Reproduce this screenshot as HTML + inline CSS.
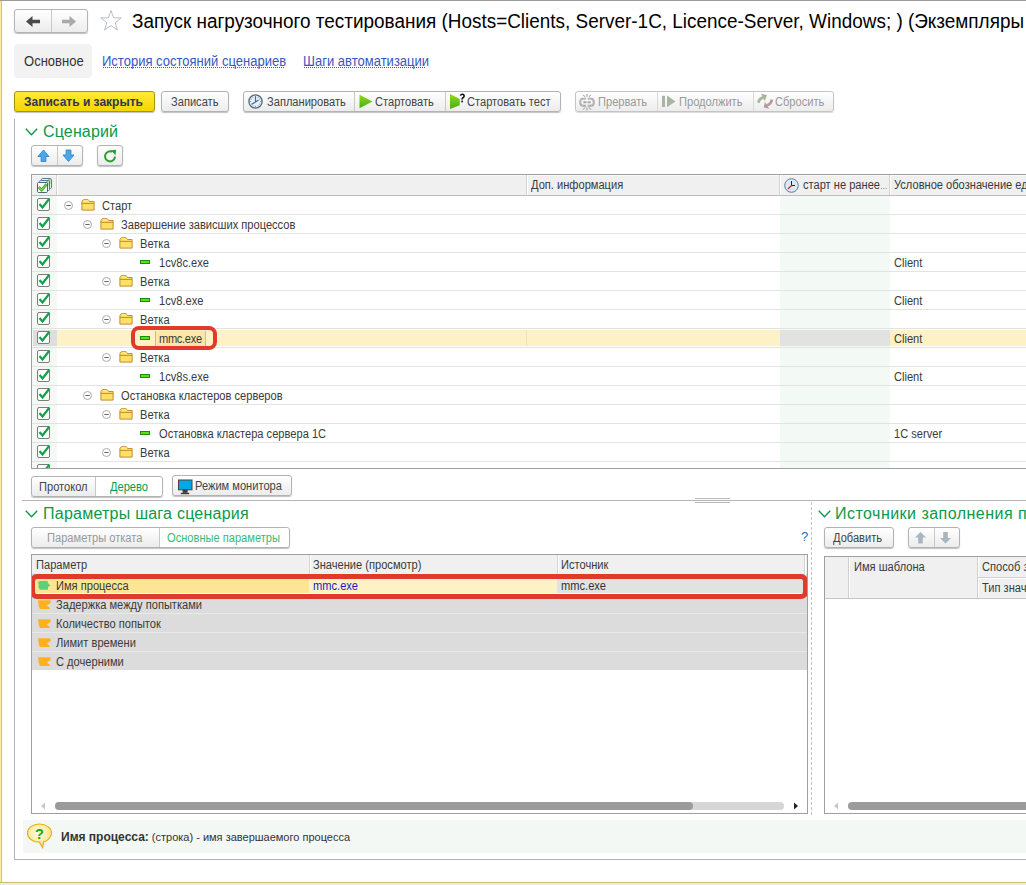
<!DOCTYPE html>
<html><head><meta charset="utf-8">
<style>
*{box-sizing:border-box;margin:0;padding:0}
html,body{width:1026px;height:885px;overflow:hidden;background:#fff;font-family:"Liberation Sans",sans-serif;color:#333}
.a{position:absolute}
svg{display:block}
.t{position:absolute;white-space:nowrap}
.btn{position:absolute;border:1px solid #b3b3b3;border-radius:3px;background:linear-gradient(#fff,#ececec);box-shadow:0 1px 1px rgba(0,0,0,.25)}
.grp{position:absolute;border:1px solid #b3b3b3;border-radius:3px;background:linear-gradient(#fff,#ececec);box-shadow:0 1px 1px rgba(0,0,0,.25)}
.sep{position:absolute;top:0;bottom:0;width:1px;background:#c8c8c8}
.bt{position:absolute;font-size:12px;color:#444;white-space:nowrap;transform:scaleX(.925);transform-origin:0 0;margin-top:-1px}
.h{position:absolute;font-size:16px;color:#0a9a48;white-space:nowrap}
.row{position:absolute;left:57px;right:0;height:19px;border-bottom:1px solid #e6e6e6}
.cb{position:absolute;width:13px;height:13px;border:1px solid #7a7a7a;border-radius:2px;background:#fff}
.ft{position:absolute;font-size:12px;color:#3a3a3a;white-space:nowrap;transform:scaleX(.925);transform-origin:0 0;margin-top:-1px}
</style></head>
<body>
<!-- window frame -->
<div class="a" style="left:0;top:0;width:1026px;height:1px;background:#9b9b9b"></div>
<div class="a" style="left:0;top:1px;width:1px;height:882px;background:#fdeb9a"></div><div class="a" style="left:1px;top:1px;width:1px;height:882px;background:#cdc488"></div>
<div class="a" style="left:0;top:882px;width:1026px;height:1px;background:#cbbd6e"></div>
<div class="a" style="left:0;top:883px;width:1026px;height:2px;background:#e9eaee"></div>

<!-- nav buttons -->
<div class="grp" style="left:14px;top:9px;width:74px;height:24px"><div class="sep" style="left:36px"></div></div>
<!-- star -->
<div class="a" style="left:99px;top:9px;width:24px;height:24px">
<svg width="24" height="24" viewBox="0 0 24 24"><path d="M12 1.5 L14.6 8.8 L22.3 8.9 L16.2 13.6 L18.4 21 L12 16.6 L5.6 21 L7.8 13.6 L1.7 8.9 L9.4 8.8 Z" fill="none" stroke="#b9bec6" stroke-width="1"/></svg>
</div>
<div class="t" style="left:132px;top:10px;font-size:19.6px;color:#000;transform:scaleX(.966);transform-origin:0 0">Запуск нагрузочного тестирования (Hosts=Clients, Server-1C, Licence-Server, Windows; ) (Экземпляры</div>

<!-- tabs -->
<div class="a" style="left:14px;top:44px;width:78px;height:34px;background:#f2f2f2;border-radius:4px"></div>
<div class="t" style="left:24px;top:53px;font-size:14px;color:#333;transform:scaleX(.93);transform-origin:0 0">Основное</div>
<div class="t" style="left:102px;top:53px;font-size:14px;color:#3557c4;transform:scaleX(.93);transform-origin:0 0">История состояний сценариев</div><div class="a" style="left:103px;top:67px;width:181px;height:1px;background:repeating-linear-gradient(90deg,#3557c4 0 1px,transparent 1px 2px)"></div>
<div class="t" style="left:303px;top:53px;font-size:14px;color:#3557c4;transform:scaleX(.93);transform-origin:0 0">Шаги автоматизации</div><div class="a" style="left:304px;top:67px;width:122px;height:1px;background:repeating-linear-gradient(90deg,#3557c4 0 1px,transparent 1px 2px)"></div>

<!-- command bar -->
<div class="btn" style="left:14px;top:91px;width:141px;height:21px;background:linear-gradient(#ffea38,#f4d600);border-color:#aa9400"></div>
<div class="bt" style="left:24px;top:95px;font-weight:bold;font-size:12px;color:#30354a;transform:none;margin-top:0">Записать и закрыть</div>
<div class="btn" style="left:161px;top:91px;width:68px;height:21px"></div>
<div class="bt" style="left:171px;top:96px">Записать</div>

<div class="grp" style="left:243px;top:91px;width:318px;height:21px"><div class="sep" style="left:110px"></div><div class="sep" style="left:201px"></div></div>
<div class="bt" style="left:267px;top:96px">Запланировать</div>
<div class="bt" style="left:375px;top:96px">Стартовать</div>
<div class="bt" style="left:467px;top:96px">Стартовать тест</div>

<div class="grp" style="left:575px;top:91px;width:259px;height:21px;border-color:#c4c4c4;box-shadow:0 1px 1px rgba(0,0,0,.15)"><div class="sep" style="left:81px;background:#d8d8d8"></div><div class="sep" style="left:177px;background:#d8d8d8"></div></div>
<div class="bt" style="left:598px;top:96px;color:#999">Прервать</div>
<div class="bt" style="left:679px;top:96px;color:#999">Продолжить</div>
<div class="bt" style="left:775px;top:96px;color:#999">Сбросить</div>

<!-- outer panel -->
<div class="a" style="left:14px;top:119px;width:1px;height:741px;background:#b2b2b2"></div>
<div class="a" style="left:14px;top:859px;width:1012px;height:1px;background:#b2b2b2"></div>

<!-- Scenario section -->
<div class="h" style="left:43px;top:123px;letter-spacing:0.15px">Сценарий</div>
<div class="grp" style="left:31px;top:145px;width:52px;height:21px"><div class="sep" style="left:25px"></div></div>
<div class="btn" style="left:97px;top:145px;width:26px;height:21px"></div>

<div id="tree" class="a" style="left:31px;top:174px;width:995px;height:295px;border:1px solid #a0a0a0;border-right:none;overflow:hidden">
<div class="a" style="left:0;top:0;width:994px;height:21px;background:#f0f0f0;border-top:1px solid #fafafa;border-bottom:1px solid #bdbdbd"></div>
<div class="a" style="left:24px;top:0;width:1px;height:20px;background:#d4d4d4"></div>
<div class="a" style="left:25px;top:0;width:1px;height:20px;background:#fff"></div>
<div class="a" style="left:494px;top:0;width:1px;height:20px;background:#d4d4d4"></div>
<div class="a" style="left:495px;top:0;width:1px;height:20px;background:#fff"></div>
<div class="a" style="left:747px;top:0;width:1px;height:20px;background:#d4d4d4"></div>
<div class="a" style="left:748px;top:0;width:1px;height:20px;background:#fff"></div>
<div class="a" style="left:857px;top:0;width:1px;height:20px;background:#d4d4d4"></div>
<div class="a" style="left:858px;top:0;width:1px;height:20px;background:#fff"></div>
<div class="a" style="left:4px;top:3px;width:17px;height:16px"><svg width="17" height="16" viewBox="0 0 17 16"><rect x="5.5" y="0.5" width="10" height="10" rx="1.2" fill="#eef5ee" stroke="#5a7890"/><path d="M12 1 H14.5 V6 L12 8 Z" fill="#8fd070"/><rect x="3.5" y="2.5" width="10" height="10" rx="1.2" fill="#eef5ee" stroke="#5a7890"/><path d="M10 3 H12.5 V8 L10 10 Z" fill="#8fd070"/><rect x="1.5" y="4.5" width="10" height="10" rx="1.2" fill="#fff" stroke="#46657c"/><path d="M2.8 9.2 L5.6 12 L10.6 6.2" fill="none" stroke="#2f9a2a" stroke-width="2.6"/><path d="M2.8 9.2 L5.6 12 L10.6 6.2" fill="none" stroke="#7ad84a" stroke-width="1.2"/></svg></div>
<div class="ft" style="left:499px;top:4px">Доп. информация</div>
<div class="a" style="left:752px;top:3px;width:15px;height:15px"><svg width="15" height="15" viewBox="0 0 15 15"><circle cx="7.5" cy="7.5" r="6.8" fill="#dbe9f5" stroke="#5c7e98" stroke-width="1"/><path d="M7.5 3 V7.5 H11" fill="none" stroke="#222" stroke-width="1"/><path d="M7.5 7.5 L4 11" stroke="#e02020" stroke-width="1.2"/></svg></div>
<div class="ft" style="left:771px;top:4px">старт не ранее<span style="font-size:8px;letter-spacing:-0.5px">…</span></div>
<div class="ft" style="left:862px;top:4px">Условное обозначение единиц</div>
<div class="a" style="left:0;top:21px;width:25px;height:280px;background:#f4f9f6"></div>
<div class="a" style="left:748px;top:21px;width:110px;height:280px;background:#f3f9f5"></div>
<div class="a" style="left:0;top:39px;width:994px;height:1px;background:#e3e3e3"></div>
<div class="a" style="left:5px;top:22px;width:15px;height:15px"><svg width="15" height="15" viewBox="0 0 15 15"><rect x="0.5" y="1.5" width="12" height="12" rx="1.5" fill="#fff" stroke="#7d7d7d"/><path d="M2.5 7 L5.5 10.5 L12.5 1.5" fill="none" stroke="#12a04a" stroke-width="2.2"/></svg></div>
<div class="a" style="left:32px;top:26px;width:10px;height:10px"><svg width="10" height="10" viewBox="0 0 10 10"><circle cx="4.5" cy="4.5" r="4" fill="#fff" stroke="#a0a0a0" stroke-width="0.9"/><path d="M2.3 4.5 H6.7" stroke="#666" stroke-width="1"/></svg></div>
<div class="a" style="left:49px;top:24px;width:15px;height:13px"><svg width="15" height="13" viewBox="0 0 15 13"><path d="M0.9 2.6 L2.3 0.7 H7.2 L8.5 2.5 H13.1 V11.1 H0.9 Z" fill="#fde066" stroke="#c98a30" stroke-width="1" stroke-linejoin="round"/><path d="M2.6 1.3 H7 L8 2.6 H3 Z" fill="#fff27e"/><path d="M0.9 4.4 H13.1" stroke="#c98a30" stroke-width="1"/></svg></div>
<div class="ft" style="left:70px;top:25px">Старт</div>
<div class="a" style="left:0;top:58px;width:994px;height:1px;background:#e3e3e3"></div>
<div class="a" style="left:5px;top:41px;width:15px;height:15px"><svg width="15" height="15" viewBox="0 0 15 15"><rect x="0.5" y="1.5" width="12" height="12" rx="1.5" fill="#fff" stroke="#7d7d7d"/><path d="M2.5 7 L5.5 10.5 L12.5 1.5" fill="none" stroke="#12a04a" stroke-width="2.2"/></svg></div>
<div class="a" style="left:51px;top:45px;width:10px;height:10px"><svg width="10" height="10" viewBox="0 0 10 10"><circle cx="4.5" cy="4.5" r="4" fill="#fff" stroke="#a0a0a0" stroke-width="0.9"/><path d="M2.3 4.5 H6.7" stroke="#666" stroke-width="1"/></svg></div>
<div class="a" style="left:68px;top:43px;width:15px;height:13px"><svg width="15" height="13" viewBox="0 0 15 13"><path d="M0.9 2.6 L2.3 0.7 H7.2 L8.5 2.5 H13.1 V11.1 H0.9 Z" fill="#fde066" stroke="#c98a30" stroke-width="1" stroke-linejoin="round"/><path d="M2.6 1.3 H7 L8 2.6 H3 Z" fill="#fff27e"/><path d="M0.9 4.4 H13.1" stroke="#c98a30" stroke-width="1"/></svg></div>
<div class="ft" style="left:89px;top:44px">Завершение зависших процессов</div>
<div class="a" style="left:0;top:77px;width:994px;height:1px;background:#e3e3e3"></div>
<div class="a" style="left:5px;top:60px;width:15px;height:15px"><svg width="15" height="15" viewBox="0 0 15 15"><rect x="0.5" y="1.5" width="12" height="12" rx="1.5" fill="#fff" stroke="#7d7d7d"/><path d="M2.5 7 L5.5 10.5 L12.5 1.5" fill="none" stroke="#12a04a" stroke-width="2.2"/></svg></div>
<div class="a" style="left:70px;top:64px;width:10px;height:10px"><svg width="10" height="10" viewBox="0 0 10 10"><circle cx="4.5" cy="4.5" r="4" fill="#fff" stroke="#a0a0a0" stroke-width="0.9"/><path d="M2.3 4.5 H6.7" stroke="#666" stroke-width="1"/></svg></div>
<div class="a" style="left:87px;top:62px;width:15px;height:13px"><svg width="15" height="13" viewBox="0 0 15 13"><path d="M0.9 2.6 L2.3 0.7 H7.2 L8.5 2.5 H13.1 V11.1 H0.9 Z" fill="#fde066" stroke="#c98a30" stroke-width="1" stroke-linejoin="round"/><path d="M2.6 1.3 H7 L8 2.6 H3 Z" fill="#fff27e"/><path d="M0.9 4.4 H13.1" stroke="#c98a30" stroke-width="1"/></svg></div>
<div class="ft" style="left:108px;top:63px">Ветка</div>
<div class="a" style="left:0;top:96px;width:994px;height:1px;background:#e3e3e3"></div>
<div class="a" style="left:5px;top:79px;width:15px;height:15px"><svg width="15" height="15" viewBox="0 0 15 15"><rect x="0.5" y="1.5" width="12" height="12" rx="1.5" fill="#fff" stroke="#7d7d7d"/><path d="M2.5 7 L5.5 10.5 L12.5 1.5" fill="none" stroke="#12a04a" stroke-width="2.2"/></svg></div>
<div class="a" style="left:108px;top:85px;width:10px;height:4px;background:#5fe000;border:1px solid #1b8a12"></div>
<div class="ft" style="left:127px;top:82px">1cv8c.exe</div>
<div class="ft" style="left:862px;top:82px">Client</div>
<div class="a" style="left:0;top:115px;width:994px;height:1px;background:#e3e3e3"></div>
<div class="a" style="left:5px;top:98px;width:15px;height:15px"><svg width="15" height="15" viewBox="0 0 15 15"><rect x="0.5" y="1.5" width="12" height="12" rx="1.5" fill="#fff" stroke="#7d7d7d"/><path d="M2.5 7 L5.5 10.5 L12.5 1.5" fill="none" stroke="#12a04a" stroke-width="2.2"/></svg></div>
<div class="a" style="left:70px;top:102px;width:10px;height:10px"><svg width="10" height="10" viewBox="0 0 10 10"><circle cx="4.5" cy="4.5" r="4" fill="#fff" stroke="#a0a0a0" stroke-width="0.9"/><path d="M2.3 4.5 H6.7" stroke="#666" stroke-width="1"/></svg></div>
<div class="a" style="left:87px;top:100px;width:15px;height:13px"><svg width="15" height="13" viewBox="0 0 15 13"><path d="M0.9 2.6 L2.3 0.7 H7.2 L8.5 2.5 H13.1 V11.1 H0.9 Z" fill="#fde066" stroke="#c98a30" stroke-width="1" stroke-linejoin="round"/><path d="M2.6 1.3 H7 L8 2.6 H3 Z" fill="#fff27e"/><path d="M0.9 4.4 H13.1" stroke="#c98a30" stroke-width="1"/></svg></div>
<div class="ft" style="left:108px;top:101px">Ветка</div>
<div class="a" style="left:0;top:134px;width:994px;height:1px;background:#e3e3e3"></div>
<div class="a" style="left:5px;top:117px;width:15px;height:15px"><svg width="15" height="15" viewBox="0 0 15 15"><rect x="0.5" y="1.5" width="12" height="12" rx="1.5" fill="#fff" stroke="#7d7d7d"/><path d="M2.5 7 L5.5 10.5 L12.5 1.5" fill="none" stroke="#12a04a" stroke-width="2.2"/></svg></div>
<div class="a" style="left:108px;top:123px;width:10px;height:4px;background:#5fe000;border:1px solid #1b8a12"></div>
<div class="ft" style="left:127px;top:120px">1cv8.exe</div>
<div class="ft" style="left:862px;top:120px">Client</div>
<div class="a" style="left:0;top:153px;width:994px;height:1px;background:#e3e3e3"></div>
<div class="a" style="left:5px;top:136px;width:15px;height:15px"><svg width="15" height="15" viewBox="0 0 15 15"><rect x="0.5" y="1.5" width="12" height="12" rx="1.5" fill="#fff" stroke="#7d7d7d"/><path d="M2.5 7 L5.5 10.5 L12.5 1.5" fill="none" stroke="#12a04a" stroke-width="2.2"/></svg></div>
<div class="a" style="left:70px;top:140px;width:10px;height:10px"><svg width="10" height="10" viewBox="0 0 10 10"><circle cx="4.5" cy="4.5" r="4" fill="#fff" stroke="#a0a0a0" stroke-width="0.9"/><path d="M2.3 4.5 H6.7" stroke="#666" stroke-width="1"/></svg></div>
<div class="a" style="left:87px;top:138px;width:15px;height:13px"><svg width="15" height="13" viewBox="0 0 15 13"><path d="M0.9 2.6 L2.3 0.7 H7.2 L8.5 2.5 H13.1 V11.1 H0.9 Z" fill="#fde066" stroke="#c98a30" stroke-width="1" stroke-linejoin="round"/><path d="M2.6 1.3 H7 L8 2.6 H3 Z" fill="#fff27e"/><path d="M0.9 4.4 H13.1" stroke="#c98a30" stroke-width="1"/></svg></div>
<div class="ft" style="left:108px;top:139px">Ветка</div>
<div class="a" style="left:25px;top:155px;width:969px;height:16px;background:#fdf1c6"></div>
<div class="a" style="left:1px;top:155px;width:24px;height:16px;background:#dcdfdc"></div>
<div class="a" style="left:748px;top:155px;width:110px;height:16px;background:#e1e3e0"></div>
<div class="a" style="left:494px;top:155px;width:1px;height:16px;background:#f1e2b0"></div>
<div class="a" style="left:0;top:172px;width:994px;height:1px;background:#e3e3e3"></div>
<div class="a" style="left:5px;top:155px;width:15px;height:15px"><svg width="15" height="15" viewBox="0 0 15 15"><rect x="0.5" y="1.5" width="12" height="12" rx="1.5" fill="#fff" stroke="#7d7d7d"/><path d="M2.5 7 L5.5 10.5 L12.5 1.5" fill="none" stroke="#12a04a" stroke-width="2.2"/></svg></div>
<div class="a" style="left:108px;top:161px;width:10px;height:4px;background:#5fe000;border:1px solid #1b8a12"></div>
<div class="a" style="left:123px;top:156px;width:51px;height:15px;background:#fde7a6;border-left:1.5px solid #f5c010;border-right:1.5px solid #f5c010"></div>
<div class="ft" style="left:127px;top:158px;letter-spacing:-0.35px">mmc.exe</div>
<div class="ft" style="left:862px;top:158px">Client</div>
<div class="a" style="left:0;top:191px;width:994px;height:1px;background:#e3e3e3"></div>
<div class="a" style="left:5px;top:174px;width:15px;height:15px"><svg width="15" height="15" viewBox="0 0 15 15"><rect x="0.5" y="1.5" width="12" height="12" rx="1.5" fill="#fff" stroke="#7d7d7d"/><path d="M2.5 7 L5.5 10.5 L12.5 1.5" fill="none" stroke="#12a04a" stroke-width="2.2"/></svg></div>
<div class="a" style="left:70px;top:178px;width:10px;height:10px"><svg width="10" height="10" viewBox="0 0 10 10"><circle cx="4.5" cy="4.5" r="4" fill="#fff" stroke="#a0a0a0" stroke-width="0.9"/><path d="M2.3 4.5 H6.7" stroke="#666" stroke-width="1"/></svg></div>
<div class="a" style="left:87px;top:176px;width:15px;height:13px"><svg width="15" height="13" viewBox="0 0 15 13"><path d="M0.9 2.6 L2.3 0.7 H7.2 L8.5 2.5 H13.1 V11.1 H0.9 Z" fill="#fde066" stroke="#c98a30" stroke-width="1" stroke-linejoin="round"/><path d="M2.6 1.3 H7 L8 2.6 H3 Z" fill="#fff27e"/><path d="M0.9 4.4 H13.1" stroke="#c98a30" stroke-width="1"/></svg></div>
<div class="ft" style="left:108px;top:177px">Ветка</div>
<div class="a" style="left:0;top:210px;width:994px;height:1px;background:#e3e3e3"></div>
<div class="a" style="left:5px;top:193px;width:15px;height:15px"><svg width="15" height="15" viewBox="0 0 15 15"><rect x="0.5" y="1.5" width="12" height="12" rx="1.5" fill="#fff" stroke="#7d7d7d"/><path d="M2.5 7 L5.5 10.5 L12.5 1.5" fill="none" stroke="#12a04a" stroke-width="2.2"/></svg></div>
<div class="a" style="left:108px;top:199px;width:10px;height:4px;background:#5fe000;border:1px solid #1b8a12"></div>
<div class="ft" style="left:127px;top:196px">1cv8s.exe</div>
<div class="ft" style="left:862px;top:196px">Client</div>
<div class="a" style="left:0;top:229px;width:994px;height:1px;background:#e3e3e3"></div>
<div class="a" style="left:5px;top:212px;width:15px;height:15px"><svg width="15" height="15" viewBox="0 0 15 15"><rect x="0.5" y="1.5" width="12" height="12" rx="1.5" fill="#fff" stroke="#7d7d7d"/><path d="M2.5 7 L5.5 10.5 L12.5 1.5" fill="none" stroke="#12a04a" stroke-width="2.2"/></svg></div>
<div class="a" style="left:51px;top:216px;width:10px;height:10px"><svg width="10" height="10" viewBox="0 0 10 10"><circle cx="4.5" cy="4.5" r="4" fill="#fff" stroke="#a0a0a0" stroke-width="0.9"/><path d="M2.3 4.5 H6.7" stroke="#666" stroke-width="1"/></svg></div>
<div class="a" style="left:68px;top:214px;width:15px;height:13px"><svg width="15" height="13" viewBox="0 0 15 13"><path d="M0.9 2.6 L2.3 0.7 H7.2 L8.5 2.5 H13.1 V11.1 H0.9 Z" fill="#fde066" stroke="#c98a30" stroke-width="1" stroke-linejoin="round"/><path d="M2.6 1.3 H7 L8 2.6 H3 Z" fill="#fff27e"/><path d="M0.9 4.4 H13.1" stroke="#c98a30" stroke-width="1"/></svg></div>
<div class="ft" style="left:89px;top:215px">Остановка кластеров серверов</div>
<div class="a" style="left:0;top:248px;width:994px;height:1px;background:#e3e3e3"></div>
<div class="a" style="left:5px;top:231px;width:15px;height:15px"><svg width="15" height="15" viewBox="0 0 15 15"><rect x="0.5" y="1.5" width="12" height="12" rx="1.5" fill="#fff" stroke="#7d7d7d"/><path d="M2.5 7 L5.5 10.5 L12.5 1.5" fill="none" stroke="#12a04a" stroke-width="2.2"/></svg></div>
<div class="a" style="left:70px;top:235px;width:10px;height:10px"><svg width="10" height="10" viewBox="0 0 10 10"><circle cx="4.5" cy="4.5" r="4" fill="#fff" stroke="#a0a0a0" stroke-width="0.9"/><path d="M2.3 4.5 H6.7" stroke="#666" stroke-width="1"/></svg></div>
<div class="a" style="left:87px;top:233px;width:15px;height:13px"><svg width="15" height="13" viewBox="0 0 15 13"><path d="M0.9 2.6 L2.3 0.7 H7.2 L8.5 2.5 H13.1 V11.1 H0.9 Z" fill="#fde066" stroke="#c98a30" stroke-width="1" stroke-linejoin="round"/><path d="M2.6 1.3 H7 L8 2.6 H3 Z" fill="#fff27e"/><path d="M0.9 4.4 H13.1" stroke="#c98a30" stroke-width="1"/></svg></div>
<div class="ft" style="left:108px;top:234px">Ветка</div>
<div class="a" style="left:0;top:267px;width:994px;height:1px;background:#e3e3e3"></div>
<div class="a" style="left:5px;top:250px;width:15px;height:15px"><svg width="15" height="15" viewBox="0 0 15 15"><rect x="0.5" y="1.5" width="12" height="12" rx="1.5" fill="#fff" stroke="#7d7d7d"/><path d="M2.5 7 L5.5 10.5 L12.5 1.5" fill="none" stroke="#12a04a" stroke-width="2.2"/></svg></div>
<div class="a" style="left:108px;top:256px;width:10px;height:4px;background:#5fe000;border:1px solid #1b8a12"></div>
<div class="ft" style="left:127px;top:253px">Остановка кластера сервера 1С</div>
<div class="ft" style="left:862px;top:253px">1C server</div>
<div class="a" style="left:0;top:286px;width:994px;height:1px;background:#e3e3e3"></div>
<div class="a" style="left:5px;top:269px;width:15px;height:15px"><svg width="15" height="15" viewBox="0 0 15 15"><rect x="0.5" y="1.5" width="12" height="12" rx="1.5" fill="#fff" stroke="#7d7d7d"/><path d="M2.5 7 L5.5 10.5 L12.5 1.5" fill="none" stroke="#12a04a" stroke-width="2.2"/></svg></div>
<div class="a" style="left:70px;top:273px;width:10px;height:10px"><svg width="10" height="10" viewBox="0 0 10 10"><circle cx="4.5" cy="4.5" r="4" fill="#fff" stroke="#a0a0a0" stroke-width="0.9"/><path d="M2.3 4.5 H6.7" stroke="#666" stroke-width="1"/></svg></div>
<div class="a" style="left:87px;top:271px;width:15px;height:13px"><svg width="15" height="13" viewBox="0 0 15 13"><path d="M0.9 2.6 L2.3 0.7 H7.2 L8.5 2.5 H13.1 V11.1 H0.9 Z" fill="#fde066" stroke="#c98a30" stroke-width="1" stroke-linejoin="round"/><path d="M2.6 1.3 H7 L8 2.6 H3 Z" fill="#fff27e"/><path d="M0.9 4.4 H13.1" stroke="#c98a30" stroke-width="1"/></svg></div>
<div class="ft" style="left:108px;top:272px">Ветка</div>
<div class="a" style="left:0;top:305px;width:994px;height:1px;background:#e3e3e3"></div>
<div class="a" style="left:5px;top:288px;width:15px;height:15px"><svg width="15" height="15" viewBox="0 0 15 15"><rect x="0.5" y="1.5" width="12" height="12" rx="1.5" fill="#fff" stroke="#7d7d7d"/><path d="M2.5 7 L5.5 10.5 L12.5 1.5" fill="none" stroke="#12a04a" stroke-width="2.2"/></svg></div>
<div class="a" style="left:108px;top:294px;width:10px;height:4px;background:#5fe000;border:1px solid #1b8a12"></div>
<div class="ft" style="left:127px;top:291px"></div>
<div class="ft" style="left:862px;top:291px">…</div>
<div class="a" style="left:99px;top:151px;width:86px;height:24px;border:4.5px solid #e03a2e;border-radius:8px"></div>
</div>

<!-- bottom toggles -->
<div class="grp" style="left:31px;top:476px;width:132px;height:21px"><div class="a" style="left:63px;top:0;right:0;bottom:0;background:#fff;border-radius:0 3px 3px 0"></div><div class="sep" style="left:63px"></div></div>
<div class="bt" style="left:39px;top:481px">Протокол</div>
<div class="bt" style="left:110px;top:481px;color:#0a9a48">Дерево</div>
<div class="btn" style="left:172px;top:475px;width:120px;height:21px"></div>
<div class="bt" style="left:195px;top:480px">Режим монитора</div>

<div class="a" style="left:22px;top:500px;width:1004px;height:1px;background:#b5b5b5"></div>

<!-- Params section -->
<div class="h" style="left:43px;top:505px;letter-spacing:0.24px">Параметры шага сценария</div>
<div class="grp" style="left:31px;top:527px;width:259px;height:21px"><div class="a" style="left:127px;top:0;right:0;bottom:0;background:#fff;border-radius:0 3px 3px 0"></div><div class="sep" style="left:127px"></div></div>
<div class="bt" style="left:47px;top:532px;color:#999">Параметры отката</div>
<div class="bt" style="left:167px;top:532px;color:#3cb878">Основные параметры</div>

<div id="params" class="a" style="left:31px;top:554px;width:777px;height:260px;border:1px solid #a0a0a0;overflow:hidden">
<div class="a" style="left:0;top:0;width:775px;height:20px;background:#f0f0f0;border-bottom:1px solid #c6c6c6"></div>
<div class="a" style="left:277px;top:0;width:1px;height:20px;background:#d4d4d4"></div><div class="a" style="left:278px;top:0;width:1px;height:20px;background:#fff"></div>
<div class="a" style="left:525px;top:0;width:1px;height:20px;background:#d4d4d4"></div><div class="a" style="left:526px;top:0;width:1px;height:20px;background:#fff"></div>
<div class="ft" style="left:4px;top:4px">Параметр</div>
<div class="ft" style="left:281px;top:4px">Значение (просмотр)</div>
<div class="ft" style="left:529px;top:4px">Источник</div>
<div class="a" style="left:0;top:20px;width:277px;height:19px;background:#fde594"></div>
<div class="a" style="left:277px;top:20px;width:248px;height:19px;background:#fdf1c6"></div>
<div class="a" style="left:525px;top:20px;width:250px;height:19px;background:#e1e3e0"></div>
<div class="a" style="left:0;top:38px;width:773px;height:1px;background:#fff"></div>
<svg class="a" style="left:5px;top:25px" width="15" height="11" viewBox="0 0 15 11"><path d="M1 2 L3 1 H10.5 L11.2 3.2 L13.5 5.8 L11.2 6.5 L10.8 9.8 H2.5 L2.2 8 L1 7 L1.8 5.5 Z" fill="#5fcf7a"/></svg>
<div class="ft" style="left:24px;top:25px">Имя процесса</div>
<div class="a" style="left:0;top:39px;width:775px;height:19px;background:#dcdcdc;border-top:1px solid #e8e8e8"></div>
<svg class="a" style="left:5px;top:44px" width="15" height="11" viewBox="0 0 15 11"><path d="M1 1.2 H13.2 L13.8 4 L10 6.3 L13 9.2 L12.6 10 H3 L1.8 7.5 Z" fill="#ffb020"/></svg>
<div class="ft" style="left:24px;top:44px">Задержка между попытками</div>
<div class="a" style="left:0;top:58px;width:775px;height:19px;background:#dcdcdc;border-top:1px solid #e8e8e8"></div>
<svg class="a" style="left:5px;top:63px" width="15" height="11" viewBox="0 0 15 11"><path d="M1 1.2 H13.2 L13.8 4 L10 6.3 L13 9.2 L12.6 10 H3 L1.8 7.5 Z" fill="#ffb020"/></svg>
<div class="ft" style="left:24px;top:63px">Количество попыток</div>
<div class="a" style="left:0;top:77px;width:775px;height:19px;background:#dcdcdc;border-top:1px solid #e8e8e8"></div>
<svg class="a" style="left:5px;top:82px" width="15" height="11" viewBox="0 0 15 11"><path d="M1 1.2 H13.2 L13.8 4 L10 6.3 L13 9.2 L12.6 10 H3 L1.8 7.5 Z" fill="#ffb020"/></svg>
<div class="ft" style="left:24px;top:82px">Лимит времени</div>
<div class="a" style="left:0;top:96px;width:775px;height:19px;background:#dcdcdc;border-top:1px solid #e8e8e8"></div>
<svg class="a" style="left:5px;top:101px" width="15" height="11" viewBox="0 0 15 11"><path d="M1 1.2 H13.2 L13.8 4 L10 6.3 L13 9.2 L12.6 10 H3 L1.8 7.5 Z" fill="#ffb020"/></svg>
<div class="ft" style="left:24px;top:101px">С дочерними</div>
<div class="ft" style="left:281px;top:25px;color:#1a1ad0">mmc.exe</div>
<div class="ft" style="left:529px;top:25px;color:#333">mmc.exe</div>
<div class="a" style="left:772px;top:0;width:1px;height:20px;background:#d4d4d4"></div><div class="a" style="left:773px;top:0;width:1px;height:20px;background:#fff"></div>
<div class="a" style="left:-2px;top:19px;width:778px;height:25px;border:5px solid #e03a2e;border-radius:7px"></div>
<svg class="a" style="left:8px;top:247px" width="6" height="8" viewBox="0 0 6 8"><path d="M5 0.5 V7.5 L1 4 Z" fill="#c8c8c8"/></svg>
<div class="a" style="left:23px;top:247px;width:729px;height:8px;border-radius:4px;background:#d6d6d6"></div>
<div class="a" style="left:23px;top:247px;width:638px;height:8px;border-radius:4px;background:#9b9b9b"></div>
<svg class="a" style="left:761px;top:247px" width="6" height="8" viewBox="0 0 6 8"><path d="M1 0.5 V7.5 L5 4 Z" fill="#222"/></svg>
</div>

<!-- right panel -->
<div class="h" style="left:835px;top:505px;letter-spacing:0.47px">Источники заполнения параметров</div>
<div class="btn" style="left:824px;top:527px;width:70px;height:21px"></div>
<div class="bt" style="left:833px;top:532px">Добавить</div>
<div class="grp" style="left:908px;top:527px;width:52px;height:21px"><div class="sep" style="left:25px"></div></div>
<div id="src" class="a" style="left:824px;top:556px;width:202px;height:258px;border:1px solid #a0a0a0;border-right:none;overflow:hidden">
<div class="a" style="left:0;top:0;width:210px;height:42px;background:#f0f0f0;border-bottom:1px solid #c6c6c6"></div>
<div class="a" style="left:23px;top:0;width:1px;height:41px;background:#d0d0d0"></div><div class="a" style="left:24px;top:0;width:1px;height:41px;background:#fff"></div>
<div class="a" style="left:152px;top:0;width:1px;height:41px;background:#d0d0d0"></div><div class="a" style="left:153px;top:0;width:1px;height:41px;background:#fff"></div>
<div class="a" style="left:153px;top:20px;width:60px;height:1px;background:#d0d0d0"></div><div class="a" style="left:153px;top:21px;width:60px;height:1px;background:#fff"></div>
<div class="ft" style="left:29px;top:4px">Имя шаблона</div>
<div class="ft" style="left:157px;top:4px">Способ заполнения</div>
<div class="ft" style="left:157px;top:25px">Тип значения</div>
<svg class="a" style="left:8px;top:245px" width="6" height="8" viewBox="0 0 6 8"><path d="M5 0.5 V7.5 L1 4 Z" fill="#c8c8c8"/></svg>
<div class="a" style="left:23px;top:245px;width:200px;height:8px;border-radius:4px;background:#9b9b9b"></div>
</div>

<!-- info bar -->
<div class="a" style="left:23px;top:820px;width:1003px;height:33px;background:#f3f8f5"></div>
<div class="t" style="left:61px;top:830px;font-size:11px;color:#333"><b style="font-size:12px">Имя процесса:</b> (строка) - имя завершаемого процесса</div>


<!-- right table -->
<svg class="a" style="left:178px;top:479px" width="15" height="16" viewBox="0 0 15 16"><rect x="0.5" y="1" width="13.5" height="9.8" fill="#00a8e8" stroke="#4e4038" stroke-width="1"/><rect x="4.6" y="10.8" width="5" height="3" fill="#3a3a3a"/><rect x="2.8" y="13.8" width="8.4" height="1.4" fill="#3a3a3a"/></svg>
<div class="t" style="left:801px;top:529px;font-size:13px;color:#1a6fc4">?</div>
<div class="a" style="left:695px;top:498px;width:35px;height:1px;background:#b8b8b8"></div>
<div class="a" style="left:695px;top:502px;width:35px;height:1px;background:#b8b8b8"></div>
<div class="a" style="left:811px;top:502px;width:1px;height:313px;background:repeating-linear-gradient(180deg,#c4c4c4 0 3px,transparent 3px 5px)"></div>
<svg class="a" style="left:914px;top:531px" width="13" height="14" viewBox="0 0 13 14"><path d="M6.5 1 L12 6.5 H8.8 V12.5 H4.2 V6.5 H1 Z" fill="#aab5bd"/></svg>
<svg class="a" style="left:939px;top:531px" width="13" height="14" viewBox="0 0 13 14"><path d="M6.5 12.5 L12 7 H8.8 V1 H4.2 V7 H1 Z" fill="#aab5bd"/></svg>
<svg class="a" style="left:26px;top:823px" width="27" height="26" viewBox="0 0 27 26"><defs><radialGradient id="hb" cx="0.45" cy="0.4" r="0.65"><stop offset="0" stop-color="#fffbe6"/><stop offset="1" stop-color="#fbe07a"/></radialGradient></defs><path d="M13.5 1 C20.5 1 25.5 5 25.5 10 C25.5 14.3 21.8 17.8 17.6 18.8 L16.6 24.6 L13.4 19.2 C6.5 19.2 1.5 15 1.5 10 C1.5 5 6.5 1 13.5 1 Z" fill="url(#hb)" stroke="#e2b414" stroke-width="1.2"/><text x="9" y="15.6" font-family="Liberation Sans" font-weight="bold" font-size="14.5" fill="#12a812">?</text></svg>

<!-- ICONS -->
<svg class="a" style="left:25px;top:15px" width="16" height="13" viewBox="0 0 16 13"><path d="M1 6.5 L7.5 1 V4.8 H15 V8.2 H7.5 V12 Z" fill="#4a4a4a"/></svg>
<svg class="a" style="left:61px;top:15px" width="16" height="13" viewBox="0 0 16 13"><path d="M15 6.5 L8.5 1 V4.8 H1 V8.2 H8.5 V12 Z" fill="#a9a9a9"/></svg>
<svg class="a" style="left:248px;top:94px" width="15" height="15" viewBox="0 0 15 15"><circle cx="7.5" cy="7.5" r="6.6" fill="#e6f1fa" stroke="#4f6a80" stroke-width="1.3"/><g fill="#e05050"><circle cx="7.5" cy="2.6" r=".6"/><circle cx="7.5" cy="12.4" r=".6"/><circle cx="2.6" cy="7.5" r=".6"/><circle cx="12.4" cy="7.5" r=".6"/><circle cx="10" cy="3.3" r=".5"/><circle cx="11.7" cy="5" r=".5"/><circle cx="11.7" cy="10" r=".5"/><circle cx="10" cy="11.7" r=".5"/><circle cx="5" cy="11.7" r=".5"/><circle cx="3.3" cy="10" r=".5"/><circle cx="3.3" cy="5" r=".5"/><circle cx="5" cy="3.3" r=".5"/></g><path d="M7.5 2.5 V8 M7.5 8 L3.8 10.2 M7.5 8 L10.5 6" stroke="#2a6fb0" stroke-width="1.1" fill="none"/></svg>
<svg class="a" style="left:359px;top:94px" width="14" height="15" viewBox="0 0 14 15"><defs><linearGradient id="gp" x1="0" y1="0" x2="0" y2="1"><stop offset="0" stop-color="#90dc0c"/><stop offset="1" stop-color="#48ac20"/></linearGradient></defs><path d="M0.5 0.8 L13.5 7.5 L0.5 14.2 Z" fill="url(#gp)"/></svg>
<svg class="a" style="left:449px;top:93px" width="17" height="17" viewBox="0 0 17 17"><path d="M1 1 L10.8 6 L10.8 12.2 L1 16 Z" fill="url(#gp)"/><path d="M11.4 2.6 Q11.8 1.2 13.3 1.2 Q15.1 1.2 15.1 2.9 Q15.1 4.1 13.9 4.8 Q13.1 5.3 13.1 6.6" fill="none" stroke="#111" stroke-width="1.6"/><rect x="12.3" y="7.6" width="1.7" height="1.7" fill="#111"/></svg>
<svg class="a" style="left:579px;top:94px" width="17" height="17" viewBox="0 0 17 17"><g stroke="#a08888" stroke-width="1"><path d="M8 0 V2.6 M4.2 0.8 L6 2.8 M11.8 0.8 L10 2.8 M8 13.6 V16.4 M4.2 15.6 L6 13.4 M11.8 15.6 L10 13.4"/></g><path d="M7.2 4.6 H4.2 Q1.2 4.6 1.2 8.2 Q1.2 11.8 4.2 11.8 H7.2 M4.4 8.2 H7.4 M8.8 4.6 H11.8 Q14.8 4.6 14.8 8.2 Q14.8 11.8 11.8 11.8 H8.8 M8.6 8.2 H11.6" fill="none" stroke="#a4a4a4" stroke-width="1.9"/><path d="M7.2 4.6 H4.2 Q1.2 4.6 1.2 8.2 Q1.2 11.8 4.2 11.8 H7.2 M8.8 4.6 H11.8 Q14.8 4.6 14.8 8.2 Q14.8 11.8 11.8 11.8 H8.8" fill="none" stroke="#d0d0d0" stroke-width="0.5"/></svg>
<svg class="a" style="left:662px;top:95px" width="14" height="13" viewBox="0 0 14 13"><rect x="0" y="0.8" width="3" height="11.2" fill="#a9b59e"/><path d="M5 0.5 L13.5 6.4 L5 12.2 Z" fill="#a9b59e"/></svg>
<svg class="a" style="left:757px;top:93px" width="17" height="17" viewBox="0 0 17 17"><path d="M1.4 9.8 Q2.2 5.2 6.8 4.4" fill="none" stroke="#a6b89a" stroke-width="2.8"/><path d="M4 0.8 L10 2 L7.8 8.2 Z" fill="#a6b89a"/><path d="M14.8 6.6 Q14.2 11.2 9.6 12.4" fill="none" stroke="#b49c9c" stroke-width="2.8"/><path d="M7.8 9 L6.8 14.6 L12.2 15.8 Z" fill="#b49c9c"/></svg>
<svg class="a" style="left:37px;top:149px" width="13" height="14" viewBox="0 0 13 14"><path d="M6.5 1 L12 7.5 H8.9 V12.5 H4.1 V7.5 H1 Z" fill="#4aa8e8" stroke="#2f86c8" stroke-width="0.9" stroke-linejoin="round"/></svg>
<svg class="a" style="left:62px;top:149px" width="13" height="14" viewBox="0 0 13 14"><path d="M6.5 12.5 L12 6 H8.9 V1 H4.1 V6 H1 Z" fill="#4aa8e8" stroke="#2f86c8" stroke-width="0.9" stroke-linejoin="round"/></svg>
<svg class="a" style="left:103px;top:149px" width="14" height="14" viewBox="0 0 14 14"><path d="M9 2.8 A5 5 0 1 0 12 7.6" fill="none" stroke="#28a030" stroke-width="2"/><path d="M7.6 1.2 L13 0.8 L12.6 6.2 Z" fill="#28a030"/></svg>
<svg class="a" style="left:25px;top:128px" width="13" height="8" viewBox="0 0 13 8"><path d="M0.8 0.8 L6.5 6.8 L12.2 0.8" fill="none" stroke="#0a9a48" stroke-width="1.4"/></svg>
<svg class="a" style="left:25px;top:510px" width="13" height="8" viewBox="0 0 13 8"><path d="M0.8 0.8 L6.5 6.8 L12.2 0.8" fill="none" stroke="#0a9a48" stroke-width="1.4"/></svg>
<svg class="a" style="left:818px;top:510px" width="13" height="8" viewBox="0 0 13 8"><path d="M0.8 0.8 L6.5 6.8 L12.2 0.8" fill="none" stroke="#0a9a48" stroke-width="1.4"/></svg>
</body></html>
